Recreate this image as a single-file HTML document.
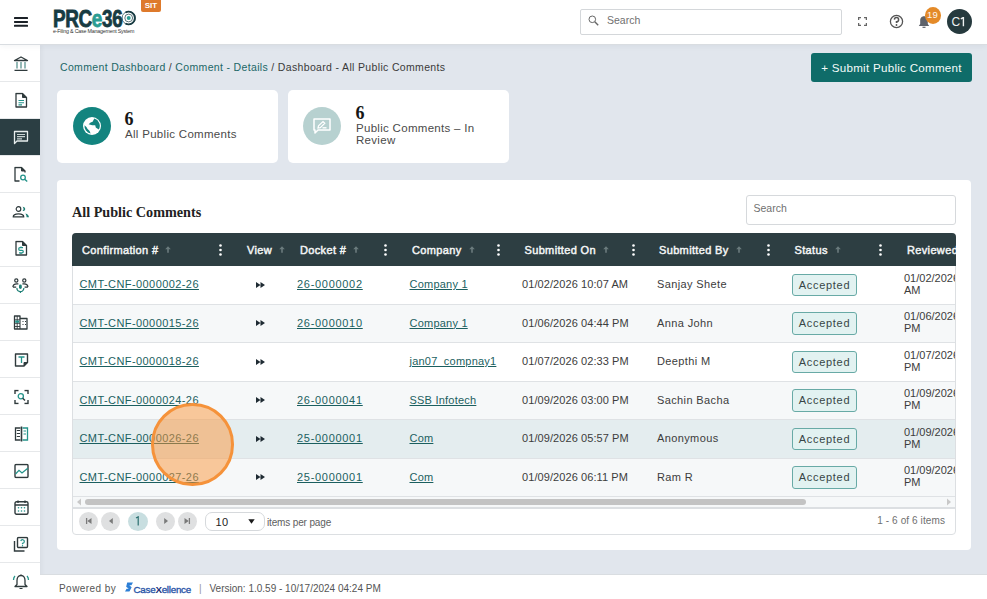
<!DOCTYPE html>
<html><head><meta charset="utf-8">
<style>
*{box-sizing:border-box;margin:0;padding:0}
html,body{width:987px;height:599px;overflow:hidden;background:#e1e6ed;font-family:"Liberation Sans",sans-serif;color:#333}
.abs{position:absolute}
#hdr{position:absolute;left:0;top:0;width:987px;height:45px;background:#fff;border-bottom:1px solid #d9dde1;z-index:2;box-shadow:0 1px 6px rgba(40,50,60,0.06)}
#side{position:absolute;left:0;top:45px;width:40px;height:554px;background:#fff;box-shadow:2px 0 4px rgba(0,0,0,0.04)}
.si{position:absolute;left:0;width:40px;height:37px;border-bottom:1px solid #e6e8ea;display:flex;align-items:center;justify-content:center}
.si.act{background:#2b3e43}
.si svg{transform:translate(1px,0.5px)}
#crumb{position:absolute;left:60px;top:61px;font-size:10.5px;letter-spacing:0.34px;color:#1b6767;white-space:nowrap}
#crumb .cur{color:#3a3a3a}
#btn{position:absolute;left:811px;top:53px;width:161px;height:29px;background:#0f6c69;border-radius:3px;color:#f4fbfa;font-size:11.6px;letter-spacing:0.27px;padding-top:0;display:flex;align-items:center;justify-content:center}
.card{position:absolute;top:90px;height:72.7px;background:#fff;border-radius:5px}
.circ{position:absolute;border-radius:50%;width:38px;height:38px;display:flex;align-items:center;justify-content:center}
.num{position:absolute;font-family:"Liberation Serif",serif;font-weight:bold;font-size:18px;color:#161616}
.lbl{position:absolute;font-size:11.5px;color:#4a4a4a;line-height:11px;letter-spacing:0.3px}
#panel{position:absolute;left:57px;top:180px;width:914px;height:370px;background:#fff;border-radius:4px}
#ptitle{position:absolute;left:72px;top:204px;font-family:"Liberation Serif",serif;font-weight:bold;font-size:14.2px;color:#222}
#psearch{position:absolute;left:746px;top:195px;width:210px;height:30px;border:1px solid #d6d9dc;border-radius:3px;font-size:10.5px;color:#707070;padding:6px 0 0 6.5px}
#tbl{position:absolute;left:72px;top:233px;width:884px;height:302px;border:1px solid #dcdfe2;border-radius:4px;background:#fff}
#thead{position:absolute;left:-1px;top:-1px;width:884px;height:33px;background:#2d3e42;border-radius:4px 4px 0 0;overflow:hidden}
.th{position:absolute;top:0;height:33px;line-height:34.2px;color:#f4f6f6;font-size:11px;font-weight:normal;-webkit-text-stroke:0.45px #f4f6f6;letter-spacing:0.35px;white-space:nowrap}
.arr{color:#7d8a8c;font-size:9px;margin-left:5px}
.keb{position:absolute;top:11px;width:3px;height:12px}
.row{position:absolute;left:0;width:882px;height:38.5px;border-bottom:1px solid #dfe2e5;overflow:hidden}
.td{position:absolute;font-size:11px;color:#3c3c3c;white-space:nowrap}
.lnk{color:#1b5f5f;text-decoration:underline}
.badge{position:absolute;width:65px;height:22.5px;border:1px solid #68aaa6;background:#e2f2f1;border-radius:3px;font-size:11px;color:#374646;text-align:center;line-height:20.5px;letter-spacing:0.7px}
.pb{top:277.5px;width:19px;height:19px;border-radius:50%;background:#dfe0e1;display:flex;align-items:center;justify-content:center}
#footer{position:absolute;left:40px;top:573.5px;width:947px;height:25.5px;background:#fff;border-top:1.5px solid #d9dde1;font-size:11px;color:#555}
</style></head><body>
<div id="hdr">
<svg class="abs" style="left:14px;top:17px" width="14" height="10" viewBox="0 0 14 10"><rect x="0" y="0" width="14" height="2" rx="0.6" fill="#1b2127"/><rect x="0" y="3.9" width="14" height="2" rx="0.6" fill="#1b2127"/><rect x="0" y="7.8" width="14" height="2" rx="0.6" fill="#1b2127"/></svg>
<div class="abs" id="logo" style="left:52.5px;top:5.5px;font-weight:bold;font-size:23px;color:#173b42;white-space:nowrap;transform-origin:0 0;transform:scaleX(0.82);letter-spacing:-0.4px;-webkit-text-stroke:0.8px #173b42">PRC<span style="color:#2a9d93;-webkit-text-stroke:0.8px #2a9d93">e</span>36</div>
<svg class="abs" style="left:120px;top:9px" width="17" height="18" viewBox="0 0 17 18"><circle cx="8.7" cy="9" r="6.6" fill="none" stroke="#173b42" stroke-width="0.7"/><path d="M5.5 3.5 A6.3 6.3 0 1 1 5.5 14.5" fill="none" stroke="#173b42" stroke-width="1.8"/><circle cx="8.7" cy="9" r="3.9" fill="none" stroke="#173b42" stroke-width="0.7"/><circle cx="8.7" cy="9" r="2" fill="#2a9d93"/></svg>
<div class="abs" style="left:53px;top:28px;font-size:5.3px;color:#333;white-space:nowrap;letter-spacing:-0.2px">e-Filing &amp; Case Management System</div>
<div class="abs" style="left:141px;top:0;width:20px;height:12px;background:#de7a2c;border-radius:0 0 2px 2px;color:#fff;font-size:8px;font-weight:bold;text-align:center;line-height:11px">SIT</div>
<div class="abs" style="left:580px;top:9px;width:262px;height:26px;border:1px solid #d4d7da;border-radius:2px"></div>
<svg class="abs" style="left:587.5px;top:15px" width="11" height="11" viewBox="0 0 11 11"><circle cx="4.3" cy="4.3" r="3.3" fill="none" stroke="#666" stroke-width="1"/><path d="M6.8 6.8 L10.2 10.2" stroke="#666" stroke-width="1.4"/></svg>
<div class="abs" style="left:607px;top:13.5px;font-size:10.5px;color:#707070">Search</div>
<svg class="abs" style="left:858px;top:17px" width="9" height="9" viewBox="0 0 9 9" fill="none" stroke="#666" stroke-width="1.3"><path d="M0.6 3V0.6H3M6 0.6H8.4V3M8.4 6V8.4H6M3 8.4H0.6V6"/></svg>
<svg class="abs" style="left:888.5px;top:13.5px" width="15" height="15" viewBox="0 0 15 15"><circle cx="7.5" cy="7.5" r="6.1" fill="none" stroke="#555" stroke-width="1.3"/><path d="M5.4 5.6 A2.1 2.1 0 1 1 7.5 7.8 V9.1" fill="none" stroke="#555" stroke-width="1.5"/><circle cx="7.5" cy="11" r="0.9" fill="#555"/></svg>
<svg class="abs" style="left:918px;top:15px" width="12" height="14" viewBox="0 0 12 14"><path d="M6 1.2 C3.2 1.2 2.2 3.5 2.2 5.5 V9 L0.8 11 H11.2 L9.8 9 V5.5 C9.8 3.5 8.8 1.2 6 1.2Z" fill="#5e636b"/><path d="M4.5 12.3 H7.5" stroke="#5e636b" stroke-width="1.2"/></svg>
<div class="abs" style="left:924.5px;top:7px;width:16px;height:16.5px;border-radius:50%;background:#e48a28;color:#fdf6ee;font-size:9.5px;text-align:center;line-height:15.5px;letter-spacing:0.2px">19</div>
<div class="abs" style="left:947px;top:9px;width:25px;height:25px;border-radius:50%;background:#263a3e"></div><div class="abs" style="left:951.5px;top:14.5px;font-size:12px;color:#eef2f2;line-height:14px">C</div><svg class="abs" style="left:960px;top:16.8px" width="6" height="10" viewBox="0 0 6 10"><path d="M0.8 1.8 L3.4 0.5 V9.2" fill="none" stroke="#eef2f2" stroke-width="1.4"/></svg>
</div>
<div id="side"><div class="si" style="top:0px"><svg width="16" height="16" viewBox="0 0 16 16"><path d="M8 1.5 L14.5 5 H1.5Z" fill="none" stroke="#2f3a3c" stroke-width="1.3" stroke-linejoin="round"/><path d="M4 6.5V13M8 6.5V13M12 6.5V13" stroke="#3c7f7a" stroke-width="1.1"/><path d="M1.5 14.8H14.5" stroke="#2f3a3c" stroke-width="1.3"/></svg></div>
<div class="si" style="top:37px"><svg width="14" height="16" viewBox="0 0 14 16"><path d="M2 1 H8.5 L12.5 5 V14.5 H2Z" fill="none" stroke="#2f3a3c" stroke-width="1.3" stroke-linejoin="round"/><path d="M8.5 1V5H12.5" fill="#2f3a3c" stroke="#2f3a3c" stroke-width="1"/><path d="M4.5 8H10M4.5 10.3H10M4.5 12.4H8" stroke="#24938a" stroke-width="1.1"/></svg></div>
<div class="si act" style="top:74px"><svg width="16" height="16" viewBox="0 0 16 16"><path d="M1.5 2 H14.5 V11.5 H4 L1.5 14Z" fill="none" stroke="#e8eeee" stroke-width="1.3" stroke-linejoin="round"/><path d="M4 5H12M4 7.2H12M4 9.3H9" stroke="#c9d3d3" stroke-width="1.2"/></svg></div>
<div class="si" style="top:111px"><svg width="16" height="16" viewBox="0 0 16 16"><path d="M6.5 14.5 H2 V1 H8.5 L12 4.5 V6" fill="none" stroke="#2f3a3c" stroke-width="1.3" stroke-linejoin="round"/><path d="M8.5 1V4.5H12" fill="#2f3a3c" stroke="#2f3a3c"/><circle cx="10" cy="11" r="2.3" fill="none" stroke="#24938a" stroke-width="1.3"/><path d="M11.7 12.7L14.2 15" stroke="#24938a" stroke-width="1.4"/></svg></div>
<div class="si" style="top:148px"><svg width="18" height="14" viewBox="0 0 18 14"><circle cx="6.5" cy="4.5" r="2.3" fill="none" stroke="#2f3a3c" stroke-width="1.2"/><path d="M1.2 12.4 C1.2 10.2 3.2 9.3 6.5 9.3 C9.8 9.3 11.8 10.2 11.8 12.4Z" fill="none" stroke="#2f3a3c" stroke-width="1.2" stroke-linejoin="round"/><path d="M10.5 2.3 C12.5 2.3 13.2 3.5 13.2 4.45 C13.2 5.4 12.5 6.6 10.5 6.6 C11.3 5.8 11.5 5 11.5 4.45 C11.5 3.9 11.3 3.1 10.5 2.3Z" fill="#1f8077"/><path d="M13.4 9 C15.8 9.5 16.9 11 16.9 12.7 H14.6 C14.6 11.2 14.2 10 13.4 9Z" fill="#1f8077"/></svg></div>
<div class="si" style="top:185px"><svg width="14" height="16" viewBox="0 0 14 16"><path d="M2 1 H8.5 L12.5 5 V14.5 H2Z" fill="none" stroke="#2f3a3c" stroke-width="1.3" stroke-linejoin="round"/><path d="M8.5 1V5H12.5" fill="#2f3a3c" stroke="#2f3a3c"/><path d="M9 7.2 H6 A1.3 1.3 0 0 0 6 9.8 H8 A1.3 1.3 0 0 1 8 12.4 H5M7 6V7.2M7 12.4V13.6" fill="none" stroke="#24938a" stroke-width="1.2"/></svg></div>
<div class="si" style="top:222px"><svg width="18" height="16" viewBox="0 0 18 16"><circle cx="4.3" cy="3" r="1.6" fill="none" stroke="#2f3a3c" stroke-width="1.2"/><circle cx="12.3" cy="3" r="1.6" fill="none" stroke="#2f3a3c" stroke-width="1.2"/><path d="M0.9 9.6 C0.9 7.5 2.4 6.4 4.8 6.4 H6.4 M0.9 9.6 H4.2M15.9 9.6 C15.9 7.5 14.4 6.4 12 6.4 H10.4 M15.9 9.6 H12.6" fill="none" stroke="#2f3a3c" stroke-width="1.2"/><rect x="7" y="7.1" width="2.8" height="4.4" rx="1.4" fill="#1f8077"/><path d="M4.9 10.6 A3.5 3.5 0 0 0 11.9 10.6M8.4 14 V15.5" fill="none" stroke="#1f8077" stroke-width="1.2"/></svg></div>
<div class="si" style="top:259px"><svg width="16" height="16" viewBox="0 0 16 16"><path d="M1.5 14.5 V1.5 H7 V4 H14 V14.5Z" fill="none" stroke="#2f3a3c" stroke-width="1.3" stroke-linejoin="round"/><path d="M7 4V14.5" stroke="#2f3a3c" stroke-width="1.1"/><path d="M1.5 5.3H7M1.5 8.8H7M1.5 12H7M4.2 1.5V14.5" stroke="#2f3a3c" stroke-width="0.9"/><rect x="2.2" y="6" width="4" height="2.2" fill="#24938a"/><path d="M9.5 7H10.5M12 7H13M9.5 10H10.5M12 10H13" stroke="#2f3a3c" stroke-width="1"/></svg></div>
<div class="si" style="top:296px"><svg width="15" height="15" viewBox="0 0 15 15"><path d="M1.5 1.5 H13.5 V10 L10 13.5 H1.5Z" fill="none" stroke="#2f3a3c" stroke-width="1.4" stroke-linejoin="round"/><path d="M10 13.5 V10 H13.5" fill="#2f3a3c" stroke="#2f3a3c"/><path d="M4.5 4.5H10.5M7.5 4.5V10.5" stroke="#24938a" stroke-width="1.3"/></svg></div>
<div class="si" style="top:333px"><svg width="15" height="15" viewBox="0 0 15 15"><path d="M1 4.5V1H4.5M10.5 1H14V4.5M14 10.5V14H10.5M4.5 14H1V10.5" fill="none" stroke="#2f3a3c" stroke-width="1.4"/><circle cx="6.8" cy="6.8" r="2.6" fill="none" stroke="#24938a" stroke-width="1.3"/><path d="M8.7 8.7L11 11" stroke="#2f3a3c" stroke-width="1.4"/></svg></div>
<div class="si" style="top:370px"><svg width="15" height="17" viewBox="0 0 15 17"><path d="M6.5 2.5H1.5V14.5H6.5" fill="none" stroke="#2f3a3c" stroke-width="1.3"/><path d="M7.5 1V16" stroke="#2f3a3c" stroke-width="1.6"/><path d="M2.8 5H6M2.8 8H6M2.8 11H6" stroke="#2f3a3c" stroke-width="1.1"/><path d="M8.5 2.5H13.5V14.5H8.5" fill="none" stroke="#24938a" stroke-width="1.3"/><path d="M9.5 5.5H12M9.5 8.5H12" stroke="#24938a" stroke-width="1.1"/></svg></div>
<div class="si" style="top:407px"><svg width="15" height="15" viewBox="0 0 15 15"><rect x="1" y="1" width="13" height="13" rx="1" fill="none" stroke="#2f3a3c" stroke-width="1.4"/><path d="M1.5 10.5 L5 6.8 L8 9.5 L13.8 4.8" fill="none" stroke="#24938a" stroke-width="1.3"/></svg></div>
<div class="si" style="top:444px"><svg width="15" height="16" viewBox="0 0 15 16"><rect x="1" y="2.3" width="13" height="12.5" rx="1.5" fill="none" stroke="#2f3a3c" stroke-width="1.4"/><path d="M1 5.5H14" stroke="#2f3a3c" stroke-width="1.4"/><path d="M4 1V3.5M11 1V3.5" stroke="#2f3a3c" stroke-width="1.4"/><g fill="#24938a"><circle cx="4.5" cy="8.3" r="0.8"/><circle cx="7.5" cy="8.3" r="0.8"/><circle cx="10.5" cy="8.3" r="0.8"/><circle cx="4.5" cy="11.5" r="0.8"/><circle cx="7.5" cy="11.5" r="0.8"/><circle cx="10.5" cy="11.5" r="0.8"/></g></svg></div>
<div class="si" style="top:481px"><svg width="16" height="16" viewBox="0 0 16 16"><rect x="4.5" y="1" width="10" height="10" rx="1" fill="none" stroke="#2f3a3c" stroke-width="1.4"/><path d="M1.5 4.5V14.5H11.5" fill="none" stroke="#2f3a3c" stroke-width="1.4"/><path d="M7.8 4.5 A1.8 1.8 0 1 1 9.5 6.8 V7.8" fill="none" stroke="#24938a" stroke-width="1.2"/><circle cx="9.5" cy="9.3" r="0.7" fill="#24938a"/></svg></div>
<div class="si" style="top:518px"><svg width="18" height="16" viewBox="0 0 18 16"><path d="M9 2 C6 2 5 4.5 5 7 V11 L3 13 H15 L13 11 V7 C13 4.5 12 2 9 2Z" fill="none" stroke="#2f3a3c" stroke-width="1.3" stroke-linejoin="round"/><path d="M9 1V2.2" stroke="#2f3a3c" stroke-width="1.2"/><path d="M7.5 15H10.5" stroke="#2f3a3c" stroke-width="1.2"/><path d="M3 2.5 C2 3.5 1.5 5 1.5 6.5M15 2.5 C16 3.5 16.5 5 16.5 6.5" fill="none" stroke="#24938a" stroke-width="1.3"/></svg></div></div>
<div id="crumb">Comment Dashboard <span class="cur">/</span> Comment - Details <span class="cur">/ Dashboard - All Public Comments</span></div>
<div id="btn">+ Submit Public Comment</div>
<div class="card" style="left:57px;width:221px">
<div class="circ" style="left:15.5px;top:17px;background:#13847f"><svg width="20" height="20" viewBox="0 0 20 20"><circle cx="10" cy="10" r="9" fill="#fff"/><path d="M12.3 2.6 A7.5 7.5 0 0 1 16.9 13.4 L15.2 12.6 L13.8 11.4 L13.2 9.2 L10.2 9.3 L6.6 8.3 L8.6 6.4 L10.6 5.8 Z" fill="#13847f"/><path d="M2.5 9.2 A7.5 7.5 0 0 0 8.6 17.4 L7.6 15.1 L5.6 13.1 L4.4 11 Z" fill="#13847f"/></svg></div>
<div class="num" style="left:67.5px;top:19px">6</div>
<div class="lbl" style="left:68px;top:39px">All Public Comments</div>
</div>
<div class="card" style="left:288px;width:221px">
<div class="circ" style="left:15px;top:17px;background:#b7d1d0"><svg width="20" height="18" viewBox="0 0 20 18"><path d="M2 2 H18 V13 H6 L3 16 V13 H2Z" fill="none" stroke="#fff" stroke-width="1.5" stroke-linejoin="round"/><path d="M6 11 L6.5 8.8 L11 4.5 L12.8 6.3 L8.3 10.6Z" fill="none" stroke="#fff" stroke-width="1.2"/><path d="M10.5 10.8H14.5" stroke="#fff" stroke-width="1.4"/></svg></div>
<div class="num" style="left:67.5px;top:13px">6</div>
<div class="lbl" style="left:68px;top:32px;line-height:12px">Public Comments &ndash; In<br>Review</div>
</div>
<div id="panel"></div>
<div id="ptitle">All Public Comments</div>
<div id="psearch">Search</div>
<div id="tbl"><div id="thead"><div class="th" style="left:10px">Confirmation #<svg style="margin-left:7px;vertical-align:1px" width="6" height="7" viewBox="0 0 6 7"><path d="M3 0.2 L5.8 3.2 H3.8 V6.8 H2.2 V3.2 H0.2Z" fill="#6b7b7d"/></svg></div><svg class="keb" style="left:146.5px" width="3" height="12" viewBox="0 0 3 12"><circle cx="1.5" cy="1.5" r="1.3" fill="#fff"/><circle cx="1.5" cy="6" r="1.3" fill="#fff"/><circle cx="1.5" cy="10.5" r="1.3" fill="#fff"/></svg><div class="th" style="left:175px">View<svg style="margin-left:7px;vertical-align:1px" width="6" height="7" viewBox="0 0 6 7"><path d="M3 0.2 L5.8 3.2 H3.8 V6.8 H2.2 V3.2 H0.2Z" fill="#6b7b7d"/></svg></div><div class="th" style="left:228px">Docket #<svg style="margin-left:7px;vertical-align:1px" width="6" height="7" viewBox="0 0 6 7"><path d="M3 0.2 L5.8 3.2 H3.8 V6.8 H2.2 V3.2 H0.2Z" fill="#6b7b7d"/></svg></div><svg class="keb" style="left:311.5px" width="3" height="12" viewBox="0 0 3 12"><circle cx="1.5" cy="1.5" r="1.3" fill="#fff"/><circle cx="1.5" cy="6" r="1.3" fill="#fff"/><circle cx="1.5" cy="10.5" r="1.3" fill="#fff"/></svg><div class="th" style="left:340px">Company<svg style="margin-left:7px;vertical-align:1px" width="6" height="7" viewBox="0 0 6 7"><path d="M3 0.2 L5.8 3.2 H3.8 V6.8 H2.2 V3.2 H0.2Z" fill="#6b7b7d"/></svg></div><svg class="keb" style="left:425px" width="3" height="12" viewBox="0 0 3 12"><circle cx="1.5" cy="1.5" r="1.3" fill="#fff"/><circle cx="1.5" cy="6" r="1.3" fill="#fff"/><circle cx="1.5" cy="10.5" r="1.3" fill="#fff"/></svg><div class="th" style="left:452.5px">Submitted On<svg style="margin-left:7px;vertical-align:1px" width="6" height="7" viewBox="0 0 6 7"><path d="M3 0.2 L5.8 3.2 H3.8 V6.8 H2.2 V3.2 H0.2Z" fill="#6b7b7d"/></svg></div><svg class="keb" style="left:559.5px" width="3" height="12" viewBox="0 0 3 12"><circle cx="1.5" cy="1.5" r="1.3" fill="#fff"/><circle cx="1.5" cy="6" r="1.3" fill="#fff"/><circle cx="1.5" cy="10.5" r="1.3" fill="#fff"/></svg><div class="th" style="left:587px">Submitted By<svg style="margin-left:7px;vertical-align:1px" width="6" height="7" viewBox="0 0 6 7"><path d="M3 0.2 L5.8 3.2 H3.8 V6.8 H2.2 V3.2 H0.2Z" fill="#6b7b7d"/></svg></div><svg class="keb" style="left:694.5px" width="3" height="12" viewBox="0 0 3 12"><circle cx="1.5" cy="1.5" r="1.3" fill="#fff"/><circle cx="1.5" cy="6" r="1.3" fill="#fff"/><circle cx="1.5" cy="10.5" r="1.3" fill="#fff"/></svg><div class="th" style="left:722.5px">Status<svg style="margin-left:7px;vertical-align:1px" width="6" height="7" viewBox="0 0 6 7"><path d="M3 0.2 L5.8 3.2 H3.8 V6.8 H2.2 V3.2 H0.2Z" fill="#6b7b7d"/></svg></div><svg class="keb" style="left:806.5px" width="3" height="12" viewBox="0 0 3 12"><circle cx="1.5" cy="1.5" r="1.3" fill="#fff"/><circle cx="1.5" cy="6" r="1.3" fill="#fff"/><circle cx="1.5" cy="10.5" r="1.3" fill="#fff"/></svg><div class="th" style="left:835px">Reviewed</div></div><div class="row" style="top:32.40px;background:#fff"><div class="td lnk" style="left:6.5px;top:12px;letter-spacing:0.42px">CMT-CNF-0000002-26</div><svg class="abs" style="left:183px;top:15.5px" width="9" height="6" viewBox="0 0 9 6"><path d="M0 0 L4.5 3 L0 6Z M4.5 0 L9 3 L4.5 6Z" fill="#1f2b33"/></svg><div class="td lnk" style="left:224px;top:12px;letter-spacing:0.7px">26-0000002</div><div class="td lnk" style="left:336.5px;top:12px;letter-spacing:0.22px">Company 1</div><div class="td" style="left:449px;top:12px;letter-spacing:0.08px">01/02/2026 10:07 AM</div><div class="td" style="left:584px;top:12px;letter-spacing:0.38px">Sanjay Shete</div><div class="badge" style="left:719px;top:7.5px">Accepted</div><div class="td" style="left:831px;top:5.5px;line-height:12px">01/02/2026<br>AM</div></div><div class="row" style="top:70.85px;background:#f6f8f9"><div class="td lnk" style="left:6.5px;top:12px;letter-spacing:0.42px">CMT-CNF-0000015-26</div><svg class="abs" style="left:183px;top:15.5px" width="9" height="6" viewBox="0 0 9 6"><path d="M0 0 L4.5 3 L0 6Z M4.5 0 L9 3 L4.5 6Z" fill="#1f2b33"/></svg><div class="td lnk" style="left:224px;top:12px;letter-spacing:0.7px">26-0000010</div><div class="td lnk" style="left:336.5px;top:12px;letter-spacing:0.22px">Company 1</div><div class="td" style="left:449px;top:12px;letter-spacing:0.08px">01/06/2026 04:44 PM</div><div class="td" style="left:584px;top:12px;letter-spacing:0.38px">Anna John</div><div class="badge" style="left:719px;top:7.5px">Accepted</div><div class="td" style="left:831px;top:5.5px;line-height:12px">01/06/2026<br>PM</div></div><div class="row" style="top:109.30px;background:#fff"><div class="td lnk" style="left:6.5px;top:12px;letter-spacing:0.42px">CMT-CNF-0000018-26</div><svg class="abs" style="left:183px;top:15.5px" width="9" height="6" viewBox="0 0 9 6"><path d="M0 0 L4.5 3 L0 6Z M4.5 0 L9 3 L4.5 6Z" fill="#1f2b33"/></svg><div class="td lnk" style="left:336.5px;top:12px;letter-spacing:0.22px">jan07_compnay1</div><div class="td" style="left:449px;top:12px;letter-spacing:0.08px">01/07/2026 02:33 PM</div><div class="td" style="left:584px;top:12px;letter-spacing:0.38px">Deepthi M</div><div class="badge" style="left:719px;top:7.5px">Accepted</div><div class="td" style="left:831px;top:5.5px;line-height:12px">01/07/2026<br>PM</div></div><div class="row" style="top:147.75px;background:#f6f8f9"><div class="td lnk" style="left:6.5px;top:12px;letter-spacing:0.42px">CMT-CNF-0000024-26</div><svg class="abs" style="left:183px;top:15.5px" width="9" height="6" viewBox="0 0 9 6"><path d="M0 0 L4.5 3 L0 6Z M4.5 0 L9 3 L4.5 6Z" fill="#1f2b33"/></svg><div class="td lnk" style="left:224px;top:12px;letter-spacing:0.7px">26-0000041</div><div class="td lnk" style="left:336.5px;top:12px;letter-spacing:0.22px">SSB Infotech</div><div class="td" style="left:449px;top:12px;letter-spacing:0.08px">01/09/2026 03:00 PM</div><div class="td" style="left:584px;top:12px;letter-spacing:0.38px">Sachin Bacha</div><div class="badge" style="left:719px;top:7.5px">Accepted</div><div class="td" style="left:831px;top:5.5px;line-height:12px">01/09/2026<br>PM</div></div><div class="row" style="top:186.20px;background:#e4edef"><div class="td lnk" style="left:6.5px;top:12px;letter-spacing:0.42px">CMT-CNF-0000026-26</div><svg class="abs" style="left:183px;top:15.5px" width="9" height="6" viewBox="0 0 9 6"><path d="M0 0 L4.5 3 L0 6Z M4.5 0 L9 3 L4.5 6Z" fill="#1f2b33"/></svg><div class="td lnk" style="left:224px;top:12px;letter-spacing:0.7px">25-0000001</div><div class="td lnk" style="left:336.5px;top:12px;letter-spacing:0.22px">Com</div><div class="td" style="left:449px;top:12px;letter-spacing:0.08px">01/09/2026 05:57 PM</div><div class="td" style="left:584px;top:12px;letter-spacing:0.38px">Anonymous</div><div class="badge" style="left:719px;top:7.5px">Accepted</div><div class="td" style="left:831px;top:5.5px;line-height:12px">01/09/2026<br>PM</div></div><div class="row" style="top:224.65px;background:#f6f8f9"><div class="td lnk" style="left:6.5px;top:12px;letter-spacing:0.42px">CMT-CNF-0000027-26</div><svg class="abs" style="left:183px;top:15.5px" width="9" height="6" viewBox="0 0 9 6"><path d="M0 0 L4.5 3 L0 6Z M4.5 0 L9 3 L4.5 6Z" fill="#1f2b33"/></svg><div class="td lnk" style="left:224px;top:12px;letter-spacing:0.7px">25-0000001</div><div class="td lnk" style="left:336.5px;top:12px;letter-spacing:0.22px">Com</div><div class="td" style="left:449px;top:12px;letter-spacing:0.08px">01/09/2026 06:11 PM</div><div class="td" style="left:584px;top:12px;letter-spacing:0.38px">Ram R</div><div class="badge" style="left:719px;top:7.5px">Accepted</div><div class="td" style="left:831px;top:5.5px;line-height:12px">01/09/2026<br>PM</div></div><div class="abs" style="left:0;top:263px;width:882px;height:10px;background:#f6f8f9"></div>
<svg class="abs" style="left:3px;top:264px" width="6" height="8" viewBox="0 0 6 8"><path d="M5 0.5 L1 4 L5 7.5Z" fill="#c8c8c8"/></svg>
<div class="abs" style="left:12px;top:265px;width:721px;height:6px;border-radius:3px;background:#c3c3c3"></div>
<svg class="abs" style="left:873px;top:264px" width="6" height="8" viewBox="0 0 6 8"><path d="M1 0.5 L5 4 L1 7.5Z" fill="#c8c8c8"/></svg>
<div class="abs" style="left:0;top:273px;width:882px;height:1.5px;background:#dcdfe2"></div><div class="abs pb" style="left:6px"><svg width="8" height="8" viewBox="0 0 8 8"><path d="M1.6 1V7" stroke="#7a7a7a" stroke-width="1.3"/><path d="M6.5 1 L2.3 4 L6.5 7Z" fill="#7a7a7a"/></svg></div><div class="abs pb" style="left:28px"><svg width="8" height="8" viewBox="0 0 8 8"><path d="M5.8 1 L2 4 L5.8 7Z" fill="#7a7a7a"/></svg></div><div class="abs pb" style="left:55px;width:20px;background:#c8dee0"><svg width="6" height="10" viewBox="0 0 6 10"><path d="M1 2 L3.2 0.8 V9.5" fill="none" stroke="#2b6f70" stroke-width="1.2"/></svg></div><div class="abs pb" style="left:83px"><svg width="8" height="8" viewBox="0 0 8 8"><path d="M2.2 1 L6 4 L2.2 7Z" fill="#7a7a7a"/></svg></div><div class="abs pb" style="left:104.5px"><svg width="8" height="8" viewBox="0 0 8 8"><path d="M6.4 1V7" stroke="#7a7a7a" stroke-width="1.3"/><path d="M1.5 1 L5.7 4 L1.5 7Z" fill="#7a7a7a"/></svg></div><div class="abs" style="left:132px;top:278px;width:60px;height:19px;border:1px solid #d6d9dc;border-radius:7px;font-size:11px;color:#222;padding:3px 0 0 9.5px;letter-spacing:0.3px">10</div><svg class="abs" style="left:174.5px;top:285px" width="7" height="5" viewBox="0 0 7 5"><path d="M0.3 0.3 H6.7 L3.5 4.8Z" fill="#1a1a1a"/></svg><div class="abs" style="left:194px;top:282.5px;font-size:10px;color:#606060;letter-spacing:-0.15px">items per page</div><div class="abs" style="right:10px;top:281px;font-size:10px;color:#707070;letter-spacing:0.1px">1 - 6 of 6 items</div></div>
<div id="footer">
<div class="abs" style="left:19px;top:8.5px;font-size:10px;letter-spacing:0.45px;color:#555">Powered by</div>
<svg class="abs" style="left:84.5px;top:7.5px" width="8" height="10" viewBox="0 0 9 10"><path d="M2.5 0 H9 L7.2 3 H4.8 L7.5 5.2 L5 10 H0 L1.8 7 H4.2 L1.3 4.6Z" fill="#2d7fd6"/></svg>
<div class="abs" style="left:93.5px;top:9.5px;font-size:9.8px;color:#2a56a8;letter-spacing:-0.25px;-webkit-text-stroke:0.35px #2a56a8">Case<span style="color:#1a2f78;font-weight:bold;-webkit-text-stroke:0">X</span>ellence</div>
<div class="abs" style="left:159px;top:8.5px;font-size:10px;color:#999">|</div>
<div class="abs" style="left:169.5px;top:8.5px;font-size:10px;color:#555">Version: 1.0.59 - 10/17/2024 04:24 PM</div>
</div>
<div class="abs" style="left:151px;top:403px;width:82.5px;height:82.5px;border-radius:50%;border:3.7px solid #f5923a;background:rgba(250,150,60,0.5)"></div>
</body></html>
